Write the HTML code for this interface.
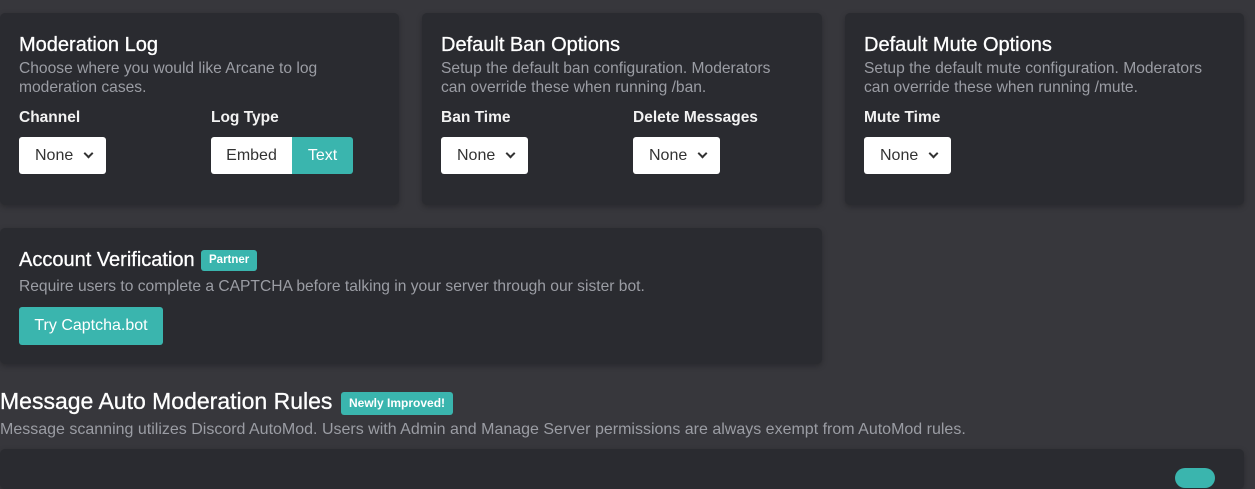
<!DOCTYPE html>
<html><head><style>
body{margin:0;width:1255px;height:472px;background:#37373c;font-family:"Liberation Sans",sans-serif;position:relative;overflow:hidden;color:#fff}
.card{position:absolute;background:#2a2b30;border-radius:5px;box-shadow:0 2px 6px rgba(0,0,0,.25)}
.t{position:absolute;font-size:20px;white-space:nowrap;-webkit-text-stroke:0.3px #fff}
.d{position:absolute;font-size:15.6px;color:#9b9da4;line-height:19px;white-space:nowrap}
.l{position:absolute;font-size:15.5px;font-weight:bold;color:#f2f2f2}
.sel{position:absolute;background:#fff;border-radius:3px;height:37px;width:87px;color:#333;font-size:16px;line-height:37px;box-sizing:border-box;padding-left:16px}
.sel:after{content:"";position:absolute;left:66px;top:13px;width:5px;height:5px;border-right:2px solid #333;border-bottom:2px solid #333;transform:rotate(45deg)}
.badge{position:absolute;background:#3ab5ae;color:#fff;font-size:11.5px;font-weight:bold;border-radius:3px;padding:0 8px;height:21px;line-height:21px}
</style></head><body>
<div class="card" style="left:0;top:13px;width:399px;height:192px">
 <div class="t" style="left:19px;top:21px">Moderation Log</div>
 <div class="d" style="left:19px;top:46px">Choose where you would like Arcane to log<br>moderation cases.</div>
 <div class="l" style="left:19px;top:96px">Channel</div>
 <div class="l" style="left:211px;top:96px">Log Type</div>
 <div class="sel" style="left:19px;top:124px">None</div>
 <div style="position:absolute;left:211px;top:124px;width:142px;height:37px;border-radius:3px;overflow:hidden;font-size:16px;line-height:37px">
  <div style="position:absolute;left:0;width:81px;height:37px;background:#fff;color:#333;text-align:center">Embed</div>
  <div style="position:absolute;left:81px;width:61px;height:37px;background:#3ab5ae;color:#fff;text-align:center">Text</div>
 </div>
</div>
<div class="card" style="left:422px;top:13px;width:400px;height:192px">
 <div class="t" style="left:19px;top:21px">Default Ban Options</div>
 <div class="d" style="left:19px;top:46px">Setup the default ban configuration. Moderators<br>can override these when running /ban.</div>
 <div class="l" style="left:19px;top:96px">Ban Time</div>
 <div class="l" style="left:211px;top:96px">Delete Messages</div>
 <div class="sel" style="left:19px;top:124px">None</div>
 <div class="sel" style="left:211px;top:124px">None</div>
</div>
<div class="card" style="left:845px;top:13px;width:399px;height:192px">
 <div class="t" style="left:19px;top:21px">Default Mute Options</div>
 <div class="d" style="left:19px;top:46px">Setup the default mute configuration. Moderators<br>can override these when running /mute.</div>
 <div class="l" style="left:19px;top:96px">Mute Time</div>
 <div class="sel" style="left:19px;top:124px">None</div>
</div>
<div class="card" style="left:0;top:228px;width:822px;height:136px">
 <div class="t" style="left:19px;top:21px">Account Verification</div>
 <div class="badge" style="left:201px;top:22px">Partner</div>
 <div class="d" style="left:19px;top:49px">Require users to complete a CAPTCHA before talking in your server through our sister bot.</div>
 <div style="position:absolute;left:19px;top:79px;width:144px;height:38px;background:#3ab5ae;border-radius:3px;font-size:16px;line-height:38px;text-align:center">Try Captcha.bot</div>
</div>
<div class="t" style="left:0;top:388px;font-size:23px">Message Auto Moderation Rules</div>
<div class="badge" style="left:341px;top:392px;height:23px;line-height:23px;font-size:12px">Newly Improved!</div>
<div class="d" style="left:0;top:420px;font-size:16px">Message scanning utilizes Discord AutoMod. Users with Admin and Manage Server permissions are always exempt from AutoMod rules.</div>
<div class="card" style="left:0;top:449px;width:1244px;height:40px">
 <div style="position:absolute;left:1175px;top:19px;width:40px;height:20px;border-radius:10px;background:#3ab5ae"></div>
</div>
</body></html>
